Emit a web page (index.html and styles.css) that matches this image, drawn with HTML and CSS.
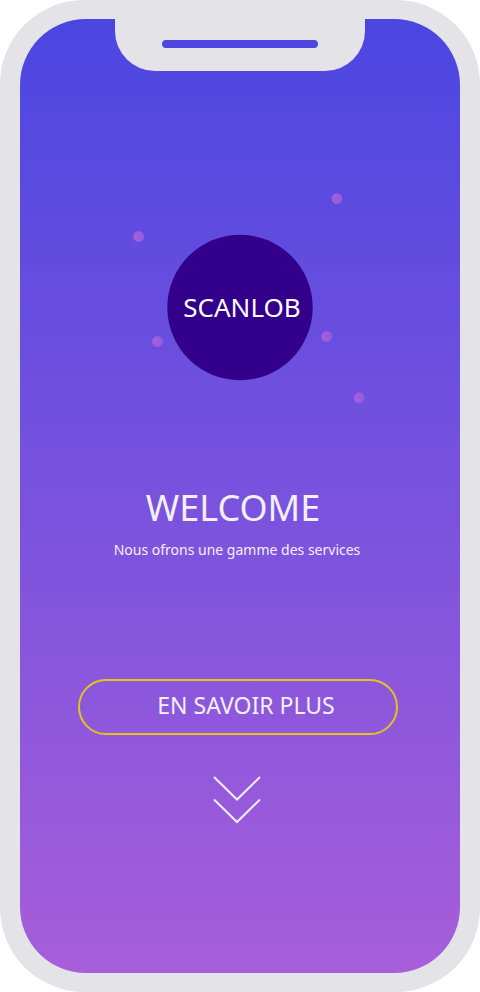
FILE: index.html
```html
<!DOCTYPE html>
<html lang="fr">
<head>
<meta charset="utf-8">
<meta name="viewport" content="width=device-width, initial-scale=1">
<title>Scanlob</title>
<link rel="stylesheet" href="styles.css">
</head>
<body>
<div class="phone">
  <main class="screen">
    <div class="notch"><span class="speaker"></span></div>
    <div class="brand">
      <svg class="brand-art" viewBox="0 0 260 240" aria-hidden="true">
        <defs>
          <linearGradient id="dot">
            <stop offset="0" stop-color="#a75ed9"/>
            <stop offset="1" stop-color="#935ce0"/>
          </linearGradient>
        </defs>
        <circle cx="130" cy="119.5" r="72.7" fill="#32008b"/>
        <g fill="url(#dot)">
          <circle cx="28.8" cy="48.5" r="5.4"/>
          <circle cx="227" cy="10.6" r="5.4"/>
          <circle cx="47.6" cy="153.5" r="5.4"/>
          <circle cx="216.7" cy="148.4" r="5.4"/>
          <circle cx="249.2" cy="209.7" r="5.4"/>
        </g>
      </svg>
      <p class="brand-name">SCANLOB</p>
    </div>
    <h1 class="title">WELCOME</h1>
    <p class="subtitle">Nous ofrons une gamme des services</p>
    <button class="more" type="button">EN SAVOIR PLUS</button>
    <svg class="chevrons" viewBox="0 0 48 48" aria-hidden="true">
      <path d="M1 1 24 23.5 47 1M1 23.5 24 46 47 23.5"/>
    </svg>
  </main>
</div>
</body>
</html>
```
FILE: styles.css
```css
* { box-sizing: border-box; }

body {
  margin: 0;
  background: #fff;
  color: #f3f0fa;
  font-family: "Noto Sans", "Open Sans", sans-serif;
}

.phone {
  display: flex;
  min-height: 100vh;
  padding: 19px 20px;
  border-radius: 84px;
  background: #e4e3e8;
}

.screen {
  display: flex;
  flex: 1;
  flex-direction: column;
  align-items: center;
  padding-bottom: 96px;
  border-radius: 66px;
  background: linear-gradient(#4b46e1, #a75eda);
}

.notch {
  display: flex;
  justify-content: center;
  width: 250px;
  height: 52px;
  padding-top: 21px;
  border-radius: 0 0 40px 40px;
  background: #e4e3e8;
}

.speaker {
  width: 156px;
  height: 8px;
  border-radius: 4px;
  background: #4e46e1;
}

.brand {
  display: grid;
  place-items: center;
  width: 260px;
  margin-top: 117px;
}

.brand-art,
.brand-name { grid-area: 1 / 1; }

.brand-art { width: 100%; }

.brand-name {
  margin: 0;
  padding: 0 0 2px 4px;
  color: #fff;
  font-size: 26px;
  line-height: 40px;
}

.title {
  margin: 52px 14px 0 0;
  font-size: 36px;
  font-weight: 400;
  line-height: 56px;
}

.subtitle {
  margin: 4px 6px 0 0;
  font-size: 14px;
  line-height: 20px;
}

.more {
  width: 320px;
  max-width: 80%;
  height: 56px;
  margin: 119px 4px 0 0;
  padding: 0 0 4px 16px;
  border: 2px solid #e4c31f;
  border-radius: 28px;
  background: none;
  color: inherit;
  font: inherit;
  font-size: 23px;
  cursor: pointer;
}

.chevrons {
  width: 48px;
  height: 48px;
  margin: 41px 6px 0 0;
  fill: none;
  stroke: #f3f0fa;
  stroke-width: 2;
}
```
